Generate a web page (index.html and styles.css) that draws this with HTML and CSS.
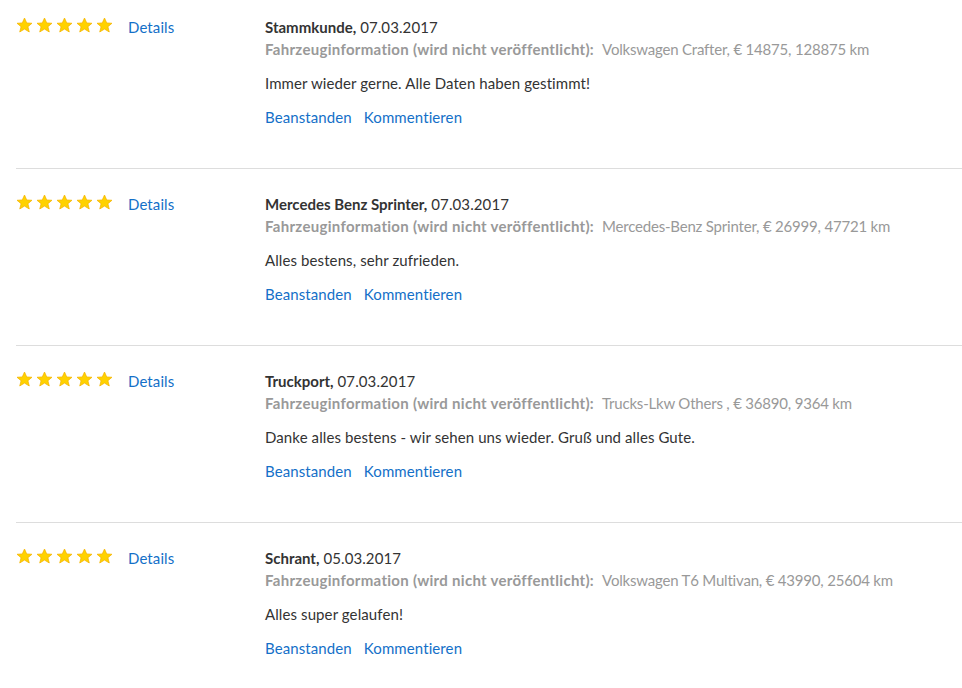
FILE: index.html
```
<!DOCTYPE html>
<html lang="de">
<head>
<meta charset="utf-8">
<title>Bewertungen</title>
<link rel="stylesheet" href="styles.css">
</head>
<body>
<svg width="0" height="0" class="defs" aria-hidden="true">
  <defs>
    <symbol id="star" viewBox="0 0 20 20">
      <polygon points="10,1.2 12.6,7 18.8,7.4 14,11.4 15.6,17.6 10,14.2 4.4,17.6 6,11.4 1.2,7.4 7.4,7" fill="#ffd200" stroke="#f4b400" stroke-width="0.9" stroke-linejoin="round"/>
    </symbol>
  </defs>
</svg>
<div class="list">
  <div class="review">
    <div class="rating">
      <span class="stars"><svg><use href="#star"/></svg><svg><use href="#star"/></svg><svg><use href="#star"/></svg><svg><use href="#star"/></svg><svg><use href="#star"/></svg></span>
      <a class="link" href="#">Details</a>
    </div>
    <div class="body">
      <div class="title"><b>Stammkunde,</b> 07.03.2017</div>
      <div class="info"><b>Fahrzeuginformation (wird nicht veröffentlicht):</b><span class="vehicle">Volkswagen Crafter, € 14875, 128875 km</span></div>
      <p class="text">Immer wieder gerne. Alle Daten haben gestimmt!</p>
      <div class="actions"><a class="link" href="#">Beanstanden</a><a class="link" href="#">Kommentieren</a></div>
    </div>
  </div>
  <div class="review">
    <div class="rating">
      <span class="stars"><svg><use href="#star"/></svg><svg><use href="#star"/></svg><svg><use href="#star"/></svg><svg><use href="#star"/></svg><svg><use href="#star"/></svg></span>
      <a class="link" href="#">Details</a>
    </div>
    <div class="body">
      <div class="title"><b>Mercedes Benz Sprinter,</b> 07.03.2017</div>
      <div class="info"><b>Fahrzeuginformation (wird nicht veröffentlicht):</b><span class="vehicle">Mercedes-Benz Sprinter, € 26999, 47721 km</span></div>
      <p class="text">Alles bestens, sehr zufrieden.</p>
      <div class="actions"><a class="link" href="#">Beanstanden</a><a class="link" href="#">Kommentieren</a></div>
    </div>
  </div>
  <div class="review">
    <div class="rating">
      <span class="stars"><svg><use href="#star"/></svg><svg><use href="#star"/></svg><svg><use href="#star"/></svg><svg><use href="#star"/></svg><svg><use href="#star"/></svg></span>
      <a class="link" href="#">Details</a>
    </div>
    <div class="body">
      <div class="title"><b>Truckport,</b> 07.03.2017</div>
      <div class="info"><b>Fahrzeuginformation (wird nicht veröffentlicht):</b><span class="vehicle">Trucks-Lkw Others , € 36890, 9364 km</span></div>
      <p class="text">Danke alles bestens - wir sehen uns wieder. Gruß und alles Gute.</p>
      <div class="actions"><a class="link" href="#">Beanstanden</a><a class="link" href="#">Kommentieren</a></div>
    </div>
  </div>
  <div class="review">
    <div class="rating">
      <span class="stars"><svg><use href="#star"/></svg><svg><use href="#star"/></svg><svg><use href="#star"/></svg><svg><use href="#star"/></svg><svg><use href="#star"/></svg></span>
      <a class="link" href="#">Details</a>
    </div>
    <div class="body">
      <div class="title"><b>Schrant,</b> 05.03.2017</div>
      <div class="info"><b>Fahrzeuginformation (wird nicht veröffentlicht):</b><span class="vehicle">Volkswagen T6 Multivan, € 43990, 25604 km</span></div>
      <p class="text">Alles super gelaufen!</p>
      <div class="actions"><a class="link" href="#">Beanstanden</a><a class="link" href="#">Kommentieren</a></div>
    </div>
  </div>
</div>
</body>
</html>
```
FILE: styles.css
```
html, body {
  margin: 0;
  padding: 0;
  background: #fff;
}
body {
  font-family: Lato, "Open Sans", sans-serif;
  font-size: 15px;
  line-height: 22px;
  color: #333;
  letter-spacing: 0.1px;
}
.defs {
  position: absolute;
  width: 0;
  height: 0;
}
.list {
  padding-left: 16px;
}
.review {
  display: flex;
  padding: 24px 0 40px;
  border-bottom: 1px solid #ddd;
}
.review:first-child {
  padding-top: 16px;
}
.review:last-child {
  border-bottom: none;
}
.rating {
  width: 249px;
  flex: none;
  display: flex;
  align-items: flex-start;
}
.stars {
  display: flex;
  gap: 3px;
  margin-top: 1px;
}
.stars svg {
  width: 17px;
  height: 17px;
  display: block;
}
.rating .link {
  margin-left: 15px;
}
.link {
  color: #1470c8;
  text-decoration: none;
}
.title b {
  font-weight: 700;
  letter-spacing: 0;
}
.info {
  color: #999;
}
.info b {
  font-weight: 700;
  letter-spacing: 0.3px;
}
.vehicle {
  margin-left: 8px;
  letter-spacing: -0.2px;
}
.text {
  margin: 12px 0 0;
}
.actions {
  margin-top: 12px;
  display: flex;
  gap: 12px;
}
```
